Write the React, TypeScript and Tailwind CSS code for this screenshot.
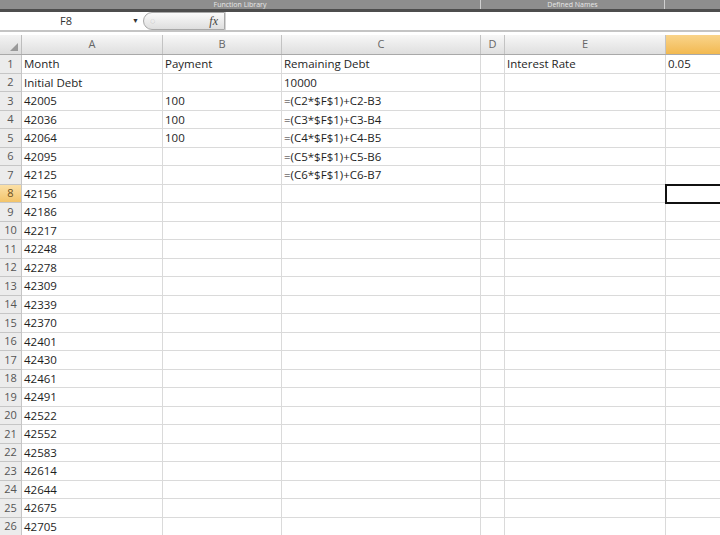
import React from "react";

const cols = [
  { key: "A", w: "w-[141px]" },
  { key: "B", w: "w-[119px]" },
  { key: "C", w: "w-[199px]" },
  { key: "D", w: "w-[24px]" },
  { key: "E", w: "w-[161px]" },
  { key: "F", w: "w-[130px]" },
];

const months = [
  "Initial Debt", "42005", "42036", "42064", "42095", "42125", "42156", "42186", "42217",
  "42248", "42278", "42309", "42339", "42370", "42401", "42430", "42461", "42491", "42522",
  "42552", "42583", "42614", "42644", "42675", "42705",
];

function cellText(row: number, col: string): string {
  if (row === 1) {
    return ({ A: "Month", B: "Payment", C: "Remaining Debt", E: "Interest Rate", F: "0.05" } as Record<string, string>)[col] ?? "";
  }
  if (col === "A") return months[row - 2] ?? "";
  if (col === "B" && row >= 3 && row <= 5) return "100";
  if (col === "C") {
    if (row === 2) return "10000";
    if (row >= 3 && row <= 7) return `=(C${row - 1}*$F$1)+C${row - 1}-B${row}`;
  }
  return "";
}

export default function App() {
  const rows = Array.from({ length: 26 }, (_, i) => i + 1);

  return (
    <div className="w-[720px] h-[535px] overflow-hidden bg-white text-[11.5px] text-[#1e1e1e]" style={{ fontFamily: '"Open Sans", "Liberation Sans", sans-serif' }}>
      {/* ribbon group labels */}
      <div className="flex h-[9px] bg-[#8e8e8e] text-[7px] leading-[9px] text-[#e6e6e6] overflow-hidden">
        <div className="w-[481px] text-center border-r border-[#cfcfcf]">Function Library</div>
        <div className="w-[184px] text-center border-r border-[#cfcfcf]">Defined Names</div>
        <div className="flex-1" />
      </div>
      <div className="h-[3px] bg-[#4d4d4d]" />

      {/* formula bar */}
      <div className="flex h-[20px] items-center border-b-2 border-[#c4c4c4] bg-white">
        <div className="w-[143px] shrink-0 flex items-center h-full">
          <span className="flex-1 text-center text-[11px] text-[#333]">F8</span>
          <span className="text-[7px] text-[#333] mr-[4px]">▼</span>
        </div>
        <div className="w-[82px] shrink-0 h-[18px] flex items-center justify-between rounded-l-full border border-[#a8a8a8] bg-gradient-to-b from-[#fafafa] to-[#dedede] px-[6px]">
          <span className="text-[9px] text-[#aaa]">◌</span>
          <span className="italic text-[12px] text-[#444]" style={{ fontFamily: '"Liberation Serif", serif' }}>fx</span>
        </div>
        <div className="flex-1 h-full border-l border-[#d4d4d4]" />
      </div>
      <div className="h-[3px] bg-white" />

      {/* column headers */}
      <div className="flex h-[20px] border-b border-[#a9a9a9]">
        <div className="w-[22px] shrink-0 flex items-end justify-end pr-[3px] pb-[3px] bg-gradient-to-b from-[#f3f3f3] to-[#dcdcdc] border-r border-[#bdbdbd]">
          <svg width="8" height="8" viewBox="0 0 8 8"><path d="M8 0 L8 8 L0 8 Z" fill="#9a9a9a" /></svg>
        </div>
        {cols.map((c) => (
          <div
            key={c.key}
            className={`${c.w} shrink-0 flex items-center justify-center text-[11px] border-r border-[#c3c3c3] ${
              c.key === "F" ? "bg-gradient-to-b from-[#f9d48a] to-[#f2b94f] text-[#7a5a20]" : "bg-gradient-to-b from-[#f7f7f7] to-[#dfdfdf] text-[#666]"
            }`}
          >
            {c.key}
          </div>
        ))}
      </div>

      {/* rows */}
      {rows.map((r) => (
        <div key={r} className="flex h-[18.5px]">
          <div
            className={`w-[22px] shrink-0 flex items-center justify-center text-[11px] border-r border-b border-[#c6c6c6] ${
              r === 8 ? "bg-gradient-to-b from-[#fbe0a6] to-[#f3c46a] text-[#6b5020]" : "bg-[#ececec] text-[#555]"
            }`}
          >
            {r}
          </div>
          {cols.map((c) => {
            const selected = r === 8 && c.key === "F";
            return (
              <div
                key={c.key}
                className={`${c.w} shrink-0 relative flex items-center pl-[2px] whitespace-nowrap border-r border-b border-[#dadada] ${
                  selected ? "overflow-visible z-10" : "overflow-hidden"
                }`}
              >
                {cellText(r, c.key)}
                {selected && <div className="absolute -left-[1px] -top-[1px] w-[131px] h-[20px] border-2 border-[#111]" />}
              </div>
            );
          })}
        </div>
      ))}
    </div>
  );
}
